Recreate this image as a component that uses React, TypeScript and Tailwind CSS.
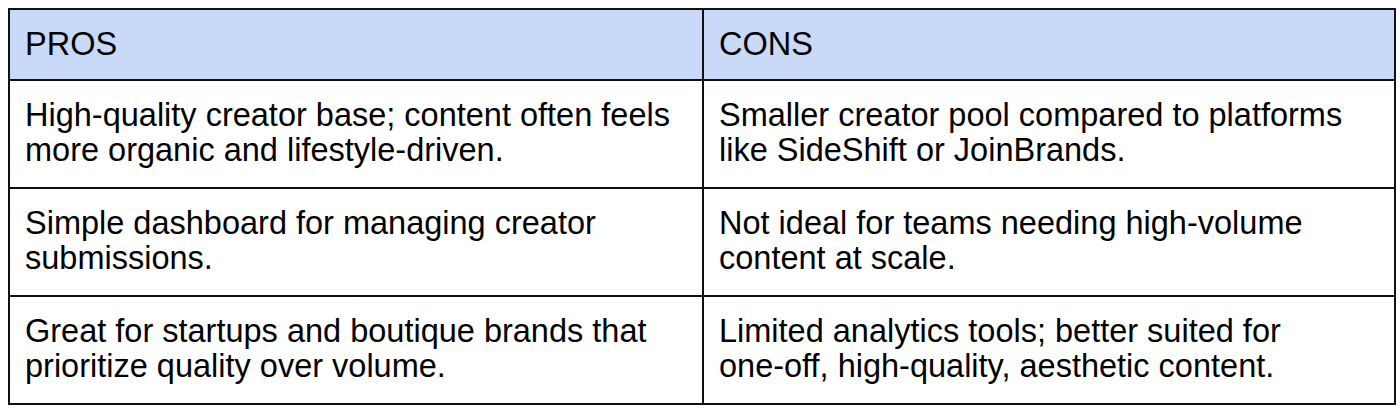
import type { ReactNode } from "react";

const rows: { pro: ReactNode; con: ReactNode }[] = [
  {
    pro: "High-quality creator base; content often feels more organic and lifestyle-driven.",
    con: "Smaller creator pool compared to platforms like SideShift or JoinBrands.",
  },
  {
    pro: "Simple dashboard for managing creator submissions.",
    con: "Not ideal for teams needing high-volume content at scale.",
  },
  {
    pro: "Great for startups and boutique brands that prioritize quality over volume.",
    con: (
      <>
        Limited analytics tools; better suited for{" "}
        <span className="whitespace-nowrap">one-off,</span> high-quality, aesthetic content.
      </>
    ),
  },
];

export default function App() {
  return (
    <div className="min-h-[411px] w-[1400px] bg-white pl-2 pt-2 font-['Liberation_Sans',Arial,sans-serif] text-[32.5px] leading-[35px] text-black">
      <div className="w-[1388px] border-2 border-[#111]">
        {/* Header */}
        <div className="grid grid-cols-2 bg-[#c9daf8]">
          <div className="px-[15px] pt-[17px] pb-[17px]">PROS</div>
          <div className="border-l-2 border-[#111] px-[15px] pt-[17px] pb-[17px]">CONS</div>
        </div>

        {rows.map((row, i) => (
          <div key={i} className="grid grid-cols-2 border-t-2 border-[#111]">
            <div className="px-[15px] pt-[17px] pb-[19px] pr-[16px]">{row.pro}</div>
            <div className="border-l-2 border-[#111] px-[15px] pt-[17px] pb-[19px] pr-[16px]">
              {row.con}
            </div>
          </div>
        ))}
      </div>
    </div>
  );
}
